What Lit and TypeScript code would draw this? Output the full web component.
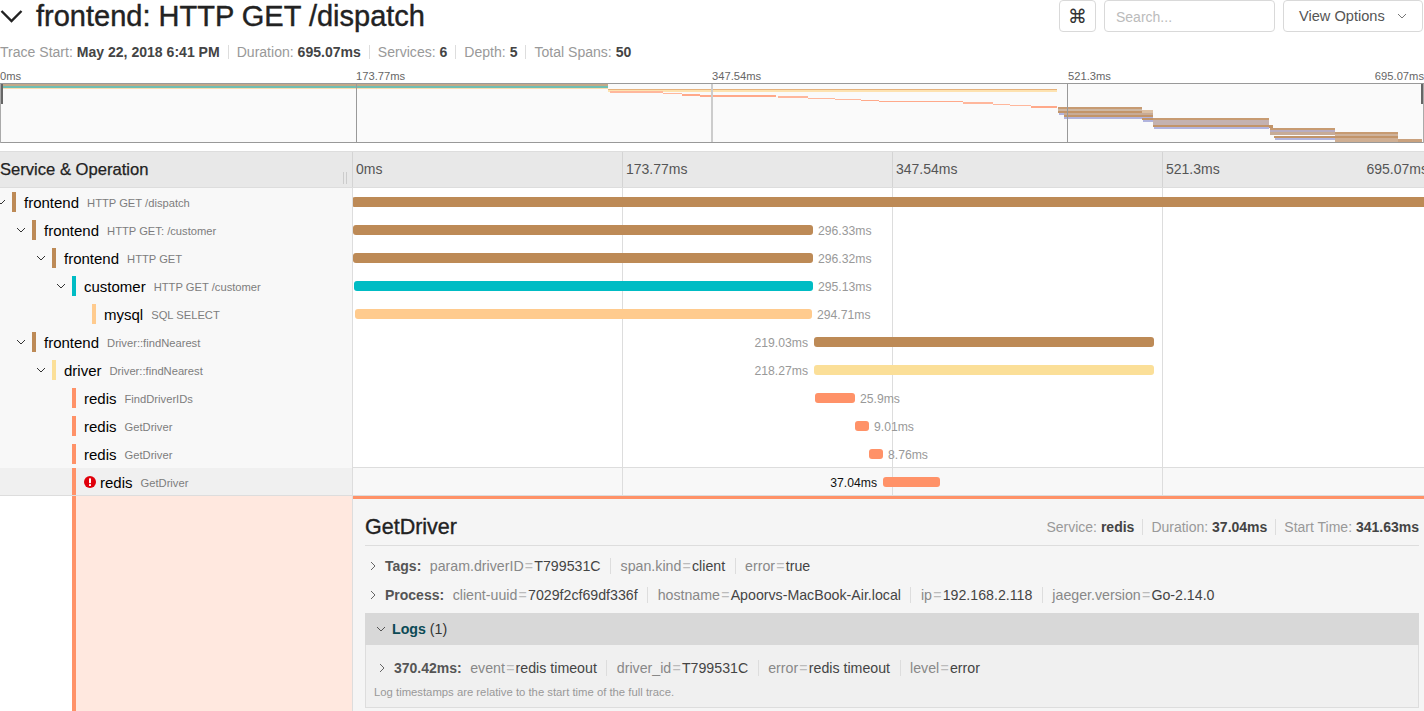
import { css, html, svg, LitElement } from "lit";
import { customElement } from "lit/decorators.js";

const BROWN = "#bd8a56";
const TEAL = "#00bcc4";
const PEACH = "#ffcb8e";
const YELLOW = "#fbdf98";
const SALMON = "#ff9268";

interface Span {
  depth: number;
  service: string;
  op: string;
  color: string;
  open?: boolean;
  left: number;
  width: number;
  label?: string;
  labelLeft?: boolean;
  error?: boolean;
}

const spans: Span[] = [
  { depth: 0, service: "frontend", op: "HTTP GET /dispatch", color: BROWN, open: true, left: -1, width: 1072 },
  { depth: 1, service: "frontend", op: "HTTP GET: /customer", color: BROWN, open: true, left: 0, width: 460, label: "296.33ms" },
  { depth: 2, service: "frontend", op: "HTTP GET", color: BROWN, open: true, left: 0, width: 460, label: "296.32ms" },
  { depth: 3, service: "customer", op: "HTTP GET /customer", color: TEAL, open: true, left: 1, width: 459, label: "295.13ms" },
  { depth: 4, service: "mysql", op: "SQL SELECT", color: PEACH, left: 2, width: 457, label: "294.71ms" },
  { depth: 1, service: "frontend", op: "Driver::findNearest", color: BROWN, open: true, left: 461, width: 340, label: "219.03ms", labelLeft: true },
  { depth: 2, service: "driver", op: "Driver::findNearest", color: YELLOW, open: true, left: 461, width: 340, label: "218.27ms", labelLeft: true },
  { depth: 3, service: "redis", op: "FindDriverIDs", color: SALMON, left: 462, width: 40, label: "25.9ms" },
  { depth: 3, service: "redis", op: "GetDriver", color: SALMON, left: 502, width: 14, label: "9.01ms" },
  { depth: 3, service: "redis", op: "GetDriver", color: SALMON, left: 516, width: 14, label: "8.76ms" },
  { depth: 3, service: "redis", op: "GetDriver", color: SALMON, left: 530, width: 57, label: "37.04ms", labelLeft: true, error: true },
];

// x, y, width, height, colour of the minimap's span strips
const mini: [number, number, number, number, string][] = [
  [3, 84, 605, 2, "#c3a988"],
  [3, 86, 605, 2, "#6fbfb4"],
  [3, 88, 605, 1, "#fbdcae"],
  [608, 89, 449, 1, "#e6b27c"],
  [608, 90, 449, 1.5, "#fde2b0"],
  [610, 91, 53, 2, "#ffb79c"],
  [663, 92.5, 19, 1.5, "#ffb79c"],
  [682, 94, 18, 1.5, "#ffa98a"],
  [700, 95, 76, 1.5, "#ffa98a"],
  [778, 96, 30, 1.5, "#ffb79c"],
  [808, 97.5, 27, 1.5, "#ffb79c"],
  [835, 98.5, 26, 1.5, "#ffb79c"],
  [861, 99.5, 18, 1.5, "#ffa98a"],
  [879, 100.5, 84, 1.5, "#ffa98a"],
  [963, 102, 30, 1.5, "#ffb79c"],
  [993, 103.5, 17, 1.5, "#ffb79c"],
  [1010, 104.5, 21, 1.5, "#ffb79c"],
  [1031, 106, 26, 1.5, "#ffa98a"],
  [1058, 107, 84, 2, "#c79b72"],
  [1058, 109, 84, 2, "#cdb7a3"],
  [1058, 111, 84, 2, "#c29469"],
  [1142, 110, 11, 3, "#dcbfa2"],
  [1059, 113, 6, 1.5, "#b1b4de"],
  [1064, 113, 89, 2, "#c7ab97"],
  [1064, 115, 89, 2, "#c29469"],
  [1064, 117, 89, 1.5, "#b1b4de"],
  [1142, 118, 11, 2, "#c29469"],
  [1143, 120, 10, 1.5, "#b1b4de"],
  [1153, 118, 116, 2, "#c79b72"],
  [1153, 120, 116, 5, "#c4b2b0"],
  [1153, 125, 116, 2, "#c29469"],
  [1154, 127, 115, 1.5, "#b1b4de"],
  [1269, 125, 4, 3, "#c29469"],
  [1270, 128, 65, 2, "#c79b72"],
  [1270, 130, 65, 2, "#b8adc2"],
  [1270, 132, 65, 3, "#c7ab97"],
  [1335, 132, 63, 2, "#c79b72"],
  [1335, 134, 63, 2, "#cfb29a"],
  [1274, 136, 124, 2, "#c29469"],
  [1275, 138, 60, 1.5, "#b1b4de"],
  [1335, 138, 63, 4, "#cfae92"],
  [1398, 139, 24, 3, "#c9a17d"],
];

const chevron = (cls: string) => html`<svg class=${cls} viewBox="0 0 10 10"><path d="M1 3l4 4 4-4" fill="none" stroke="currentColor" stroke-width="1"/></svg>`;
const chevronRight = html`<svg class="kv-chev" viewBox="0 0 10 10"><path d="M3 1l4 4-4 4" fill="none" stroke="currentColor" stroke-width="1"/></svg>`;

const kvs = (items: [string, string][]) =>
  items.map(([k, v]) => html`<span class="kv"><span class="k">${k}</span><span class="eq">=</span><span class="v">${v}</span></span>`);

@customElement("app-root")
export class AppRoot extends LitElement {
  renderRow(s: Span) {
    return html`
      <div class="row ${s.error ? "row-error" : ""}">
        <div class="name">
          <span class="indent" style="width:${s.depth * 20 + 6}px">
            ${s.open ? chevron("toggle") : ""}
          </span>
          <span class="swatch" style="background:${s.color}"></span>
          ${s.error
            ? html`<svg class="err" viewBox="0 0 12 12"><circle cx="6" cy="6" r="6" fill="#e0000b"/><rect x="5" y="2.2" width="2" height="5" rx=".6" fill="#fff"/><rect x="5" y="8" width="2" height="2" rx=".6" fill="#fff"/></svg>`
            : ""}
          <span class="service">${s.service}</span>
          <span class="op">${s.op}</span>
        </div>
        <div class="track">
          ${s.labelLeft
            ? html`<span class="label left ${s.error ? "dark" : ""}" style="width:${s.left - 6}px">${s.label}</span>
                <span class="bar" style="margin-left:6px;width:${s.width}px;background:${s.color}"></span>`
            : html`<span class="bar ${s.depth === 0 ? "open-end" : ""}" style="margin-left:${s.left}px;width:${s.width}px;background:${s.color}"></span>
                ${s.label ? html`<span class="label">${s.label}</span>` : ""}`}
        </div>
      </div>
    `;
  }

  render() {
    return html`
      <div class="top">
        <div class="title">
          <svg class="title-chev" viewBox="0 0 24 14"><path d="M1.5 2L11.5 12 21.5 2" fill="none" stroke="#222" stroke-width="2.4"/></svg>
          <h1>frontend: HTTP GET /dispatch</h1>
        </div>
        <div class="tools">
          <button class="cmd">⌘</button>
          <div class="search">Search...</div>
          <button class="view">View Options ${chevron("view-chev")}</button>
        </div>
      </div>

      <div class="stats">
        <span>Trace Start: <b>May 22, 2018 6:41 PM</b></span>
        <span>Duration: <b>695.07ms</b></span>
        <span>Services: <b>6</b></span>
        <span>Depth: <b>5</b></span>
        <span>Total Spans: <b>50</b></span>
      </div>

      <div class="mini-ticks">
        <span>0ms</span><span>173.77ms</span><span>347.54ms</span>
        <span class="last"><span>521.3ms</span><span>695.07ms</span></span>
      </div>
      <svg class="minimap" viewBox="0 83 1424 61" shape-rendering="crispEdges">
        <rect x="0" y="83" width="1424" height="60" fill="#fafafa"/>
        ${mini.map(([x, y, w, h, c]) => svg`<rect x=${x} y=${y} width=${w} height=${h} fill=${c}/>`)}
        <rect x="356" y="84" width="1" height="59" fill="#999"/>
        <rect x="711" y="84" width="2" height="59" fill="#ccc"/>
        <rect x="1067" y="84" width="1" height="59" fill="#999"/>
        <rect x="0" y="83" width="1424" height="1" fill="#999"/>
        <rect x="0" y="142" width="1424" height="1" fill="#999"/>
        <rect x="0" y="84" width="1" height="59" fill="#aaa"/>
        <rect x="1423" y="84" width="1" height="59" fill="#aaa"/>
        <rect x="1" y="84" width="2" height="20" fill="#666"/>
        <rect x="1421" y="84" width="2" height="20" fill="#666"/>
      </svg>

      <div class="head">
        <div class="head-name">
          <span>Service &amp; Operation</span>
          <span class="grip"></span>
        </div>
        <div class="head-ticks">
          <span>0ms</span><span>173.77ms</span><span>347.54ms</span>
          <span class="last"><span>521.3ms</span><span class="clipped">695.07ms</span></span>
        </div>
      </div>

      ${spans.map((s) => this.renderRow(s))}

      <div class="detail-row">
        <div class="detail-side"><span class="stripe"></span><span class="tint"></span></div>
        <div class="detail">
          <div class="detail-head">
            <h2>GetDriver</h2>
            <div class="detail-meta">
              <span>Service: <b>redis</b></span>
              <span>Duration: <b>37.04ms</b></span>
              <span>Start Time: <b>341.63ms</b></span>
            </div>
          </div>
          <div class="kv-row first">
            ${chevronRight}<b class="kv-title">Tags:</b>
            ${kvs([["param.driverID", "T799531C"], ["span.kind", "client"], ["error", "true"]])}
          </div>
          <div class="kv-row">
            ${chevronRight}<b class="kv-title">Process:</b>
            ${kvs([["client-uuid", "7029f2cf69df336f"], ["hostname", "Apoorvs-MacBook-Air.local"], ["ip", "192.168.2.118"], ["jaeger.version", "Go-2.14.0"]])}
          </div>
          <div class="logs">
            <div class="logs-head">${chevron("logs-chev")}<b>Logs</b> (1)</div>
            <div class="logs-body">
              <div class="kv-row log">
                ${chevronRight}<b class="kv-title">370.42ms:</b>
                ${kvs([["event", "redis timeout"], ["driver_id", "T799531C"], ["error", "redis timeout"], ["level", "error"]])}
              </div>
              <div class="note">Log timestamps are relative to the start time of the full trace.</div>
            </div>
          </div>
        </div>
      </div>
    `;
  }

  static styles = css`
    :host {
      display: block;
      height: 711px;
      overflow: hidden;
      background: #fff;
      font-family: "Liberation Sans", Arial, sans-serif;
      color: #333;
    }

    .top {
      display: flex;
      justify-content: space-between;
      height: 32px;
    }

    .title {
      display: flex;
      align-items: center;
    }

    .title-chev {
      width: 24px;
      height: 14px;
      margin-right: 12px;
    }

    h1 {
      margin: 0;
      padding-top: 1px;
      font-size: 29px;
      font-weight: 400;
      color: #222;
      -webkit-text-stroke: 0.4px #222;
      white-space: nowrap;
    }

    .tools {
      display: flex;
      gap: 8px;
      padding-right: 1px;
    }

    button,
    .search {
      box-sizing: border-box;
      height: 32px;
      border: 1px solid #d9d9d9;
      border-radius: 4px;
      background: #fff;
      font-family: inherit;
      font-size: 14.6px;
      color: #555;
      padding: 0;
    }

    .cmd {
      width: 37px;
      font-size: 19px;
      color: #333;
      font-family: "DejaVu Sans", sans-serif;
    }

    .search {
      width: 171px;
      padding-left: 11px;
      font-size: 14px;
      line-height: 32px;
      color: #bbb;
    }

    .view {
      display: flex;
      align-items: center;
      width: 140px;
      padding-left: 15px;
    }

    .view-chev {
      width: 10px;
      height: 10px;
      margin-left: 12px;
      color: #777;
    }

    .stats {
      display: flex;
      align-items: center;
      height: 20px;
      margin-top: 10px;
      font-size: 14.05px;
      color: #999;
    }

    .stats span {
      padding-right: 8px;
      margin-right: 8px;
      border-right: 1px solid #ddd;
      line-height: 14px;
    }

    .stats span:last-child {
      border-right: 0;
    }

    b {
      color: #444;
      font-weight: 700;
    }

    .mini-ticks {
      display: grid;
      grid-template-columns: repeat(4, 1fr);
      height: 14px;
      line-height: 14px;
      margin-top: 7px;
      font-size: 11.2px;
      color: #666;
    }

    .last {
      display: flex;
      justify-content: space-between;
    }

    .minimap {
      display: block;
      width: 1424px;
      height: 61px;
    }

    .head {
      display: flex;
      height: 35px;
      margin-top: 7px;
      background: #e8e8e8;
      border-top: 1px solid #ddd;
      border-bottom: 1px solid #ddd;
    }

    .head-name {
      position: relative;
      display: flex;
      align-items: center;
      box-sizing: border-box;
      width: 353px;
      border-right: 1px solid #d4d4d4;
      font-size: 16.6px;
      color: #222;
      -webkit-text-stroke: 0.25px #222;
    }

    .grip {
      position: absolute;
      right: 5px;
      bottom: 3px;
      width: 2px;
      height: 12px;
      border-left: 1px solid #ccc;
      border-right: 1px solid #ccc;
    }

    .head-ticks {
      flex: 1;
      display: grid;
      grid-template-columns: repeat(3, 270px) 1fr;
      align-items: center;
      overflow: hidden;
      padding-bottom: 1px;
      font-size: 14px;
      color: #555;
      background: repeating-linear-gradient(to right, transparent 0 269px, #d4d4d4 269px 270px);
    }

    .head-ticks > span {
      padding-left: 3px;
    }

    .clipped {
      margin-right: -4px;
    }

    .row {
      display: flex;
      height: 28px;
      box-sizing: border-box;
    }

    .row-error {
      border-top: 1px solid #ddd;
      border-bottom: 1px solid #ddd;
      height: 29px;
      margin-top: -1px;
    }

    .row-error .name {
      background-color: #f0f0f0;
    }

    .row-error .track {
      background-color: #f8f8f8;
    }

    .row-error .service,
    .row-error .op,
    .row-error .err,
    .row-error .label {
      margin-top: 1px;
    }

    .name {
      display: flex;
      align-items: center;
      box-sizing: border-box;
      width: 353px;
      background: #f8f8f8;
      border-right: 1px solid #ddd;
      white-space: nowrap;
    }

    .indent {
      display: flex;
      justify-content: flex-end;
      align-items: center;
      height: 100%;
      margin-right: 6px;
    }

    .toggle {
      flex: none;
      width: 10px;
      height: 10px;
      color: #333;
    }

    .swatch {
      flex: none;
      align-self: stretch;
      width: 4px;
      margin: 4px 8px 4px 0;
    }

    .row-error .swatch {
      margin: 0 8px 0 0;
    }

    .err {
      flex: none;
      width: 12px;
      height: 12px;
      margin-right: 4px;
    }

    .service {
      font-size: 15px;
      color: #000;
    }

    .op {
      margin-left: 8px;
      padding-top: 1px;
      font-size: 11.2px;
      color: #7d7d7d;
    }

    .track {
      flex: 1;
      display: flex;
      align-items: center;
      overflow: hidden;
      background-image: repeating-linear-gradient(to right, transparent 0 269px, #ddd 269px 270px);
    }

    .bar {
      flex: none;
      height: 10px;
      border-radius: 3px;
    }

    .bar.open-end {
      border-radius: 3px 0 0 3px;
    }

    .label {
      margin-left: 5px;
      padding-top: 1px;
      font-size: 12.2px;
      color: #999;
      white-space: nowrap;
    }

    .label.left {
      flex: none;
      margin-left: 0;
      text-align: right;
    }

    .label.dark {
      color: #111;
    }

    .detail-row {
      display: flex;
      height: 220px;
    }

    .detail-side {
      display: flex;
      box-sizing: border-box;
      width: 353px;
      padding-left: 72px;
      border-right: 1px solid #ddd;
    }

    .stripe {
      width: 4px;
      background: #ff9268;
    }

    .tint {
      flex: 1;
      background: #ffe8df;
    }

    .detail {
      flex: 1;
      box-sizing: border-box;
      padding: 0 5px 0 12px;
      background: #f5f5f5;
      border-top: 3px solid #ff9268;
      font-size: 14.2px;
    }

    .detail-head {
      display: flex;
      justify-content: space-between;
      align-items: center;
      box-sizing: border-box;
      height: 47px;
      padding-top: 10px;
      border-bottom: 1px solid #ddd;
    }

    h2 {
      margin: 0;
      font-size: 21.5px;
      font-weight: 400;
      color: #222;
      -webkit-text-stroke: 0.35px #222;
    }

    .detail-meta {
      display: flex;
      font-size: 14px;
      color: #999;
    }

    .detail-meta span {
      padding: 0 8px;
      border-right: 1px solid #ddd;
    }

    .detail-meta span:last-child {
      padding-right: 0;
      border-right: 0;
    }

    .kv-row {
      display: flex;
      align-items: center;
      height: 29px;
      white-space: nowrap;
    }

    .kv-row.first {
      margin-top: 5px;
    }

    .kv-chev {
      width: 10px;
      height: 10px;
      color: #666;
      margin: 0 7px 0 3px;
    }

    .kv-title {
      margin-right: -1px;
      font-size: 14px;
      color: #555;
    }

    .kv {
      padding: 0 9.5px;
      border-right: 1px solid #ddd;
      line-height: 16px;
    }

    .kv:last-child {
      border-right: 0;
    }

    .k {
      color: #888;
    }

    .eq {
      color: #bbb;
      margin: 0 1.2px;
    }

    .v {
      color: #444;
    }

    .logs {
      margin-top: 4px;
    }

    .logs-head {
      display: flex;
      align-items: center;
      height: 32px;
      background: #d8d8d8;
      color: #333;
      white-space: pre;
    }

    .logs-head b {
      color: #0b4a55;
    }

    .logs-chev {
      width: 10px;
      height: 10px;
      margin: 0 6px 0 11px;
      color: #555;
    }

    .logs-body {
      box-sizing: border-box;
      height: 63px;
      background: #f0f0f0;
      border: 1px solid #ddd;
      border-top: 0;
      padding: 9px 0 0 8px;
    }

    .kv-row.log {
      height: 28px;
    }

    .note {
      margin-top: 4px;
      font-size: 11.3px;
      color: #999;
    }
  `;
}
